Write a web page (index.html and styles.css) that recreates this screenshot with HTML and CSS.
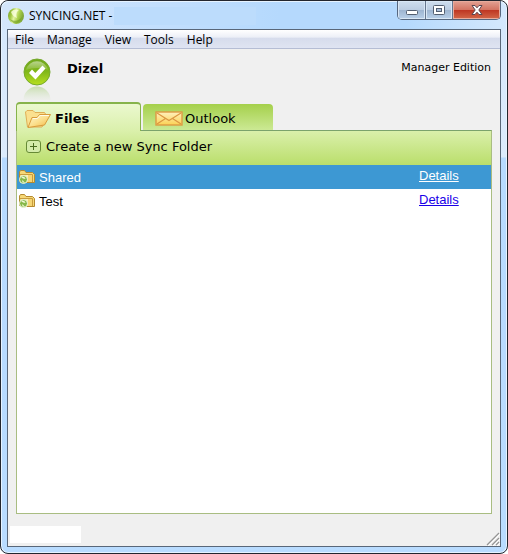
FILE: index.html
```html
<!DOCTYPE html>
<html lang="en">

<head>
  <meta charset="UTF-8">
  <meta name="viewport" content="width=device-width, initial-scale=1.0">
  <title>SYNCING.NET</title>
  <link rel="stylesheet" href="styles.css">
</head>

<body>

  <div class="window">
    <header class="titlebar">
      <svg class="app-icon" width="16" height="16" viewBox="0 0 16 16" aria-hidden="true">
        <defs>
          <linearGradient id="ball" x1="0" y1="0" x2="1" y2="0.3">
            <stop offset="0" stop-color="#6f9a1f" />
            <stop offset="0.3" stop-color="#a3c944" />
            <stop offset="0.5" stop-color="#e4f4a4" />
            <stop offset="0.75" stop-color="#a9cf4a" />
            <stop offset="1" stop-color="#7fa838" />
          </linearGradient>
        </defs>
        <circle cx="8" cy="8" r="8" fill="url(#ball)" />
        <path d="M3 4C5 1 9 1 11 2C8 4 8 7 9 10C6 9 4 7 3 4Z" fill="#fbffe2" opacity="0.8" />
        <path d="M2 11C6 14 11 13 14 9C13 13 10 16 7 15.5C4.500 15 3 13 2 11Z" fill="#6f9c22" opacity="0.6" />
      </svg>
      <span class="title">SYNCING.NET -</span>
      <span class="title-blank"></span>
      <div class="window-buttons">
        <button class="win-btn" aria-label="Minimize">
          <svg width="14" height="12" viewBox="0 0 14 12"><rect x="1.5" y="6.5" width="11" height="4" rx="1" fill="#fff" stroke="#535e70" /></svg>
        </button>
        <button class="win-btn" aria-label="Maximize">
          <svg width="14" height="12" viewBox="0 0 14 12">
            <rect x="1.5" y="1.5" width="11" height="9" rx="1" fill="#fff" stroke="#535e70" />
            <rect x="4.5" y="4.5" width="5" height="3" fill="#a9bdd8" stroke="#535e70" />
          </svg>
        </button>
        <button class="win-btn close" aria-label="Close">
          <svg width="14" height="12" viewBox="0 0 14 12"><path d="M2 1.5H5L7 3.8L9 1.5H12L8.8 6L12 10.5H9L7 8.2L5 10.5H2L5.2 6Z" fill="#fff" stroke="#5a4650" /></svg>
        </button>
      </div>
    </header>

    <div class="client">
      <nav class="menubar">
        <button>File</button>
        <button>Manage</button>
        <button>View</button>
        <button>Tools</button>
        <button>Help</button>
      </nav>

      <div class="account">
        <svg class="status-icon" width="28" height="44" viewBox="0 0 28 44" role="img" aria-label="Connected">
          <defs>
            <linearGradient id="green" x1="0" y1="0" x2="0" y2="1">
              <stop offset="0" stop-color="#6fa61d" />
              <stop offset="0.5" stop-color="#82b81a" />
              <stop offset="1" stop-color="#b8e020" />
            </linearGradient>
            <linearGradient id="shine" x1="0" y1="0" x2="0" y2="1">
              <stop offset="0" stop-color="#fff" stop-opacity="0.5" />
              <stop offset="1" stop-color="#fff" stop-opacity="0.1" />
            </linearGradient>
            <linearGradient id="reflect" gradientUnits="userSpaceOnUse" x1="0" y1="28" x2="0" y2="42">
              <stop offset="0" stop-color="#a9cf7c" stop-opacity="0.6" />
              <stop offset="1" stop-color="#cfe3bb" stop-opacity="0.1" />
            </linearGradient>
          </defs>
          <circle cx="14" cy="14" r="13" fill="url(#green)" stroke="#76aa2c" />
          <path d="M3 12A11.3 11.3 0 0 1 25 12C19 9 9 10 3 12Z" fill="url(#shine)" />
          <path d="M6 15L9 11.5L12.3 15L19.5 7.5L22.5 10.5L12.5 21.5Z" fill="#fff" />
          <path d="M0.5 42A13.5 13.5 0 0 1 27.5 42Z" fill="url(#reflect)" />
        </svg>
        <h1>Dizel</h1>
        <span class="edition">Manager Edition</span>
      </div>

      <div class="tabs" role="tablist">
        <button class="tab active" role="tab" aria-selected="true">
          <svg width="28" height="20" viewBox="0 0 28 20" aria-hidden="true">
            <defs>
              <linearGradient id="folder" x1="0" y1="0" x2="1" y2="1">
                <stop offset="0" stop-color="#fff6cf" />
                <stop offset="0.5" stop-color="#fbe08e" />
                <stop offset="1" stop-color="#f2b540" />
              </linearGradient>
            </defs>
            <path d="M2.5 18L0.5 3L2 1.5H8L10 3.5H19.5L20.5 5V12L17 18Z" fill="#fae08f" stroke="#dfae55" />
            <path d="M3 18.5L7 8.500H12L14.500 5.500H25.500L19.500 16Z" fill="url(#folder)" stroke="#d99c3c" stroke-linejoin="round" />
            <path d="M8 9.5H12.500L15 6.500H24" fill="none" stroke="#fffbe6" />
          </svg>
          Files
        </button>
        <button class="tab" role="tab" aria-selected="false">
          <svg width="28" height="16" viewBox="0 0 28 16" aria-hidden="true">
            <defs>
              <linearGradient id="mail" x1="0" y1="0" x2="0" y2="1">
                <stop offset="0" stop-color="#fff0bd" />
                <stop offset="1" stop-color="#fbd254" />
              </linearGradient>
            </defs>
            <rect x="1" y="2" width="26" height="13" fill="url(#mail)" stroke="#dd9a43" stroke-width="1.4" />
            <path d="M2 3L14 10.5L26 3M2 14L10.5 8.5M26 14L17.5 8.5" fill="none" stroke="#db9641" stroke-width="1.2" />
          </svg>
          Outlook
        </button>
      </div>

      <main class="panel">
        <div class="toolbar">
          <button class="create">
            <svg width="15" height="13" viewBox="0 0 15 13" aria-hidden="true">
              <rect x="0.5" y="0.5" width="14" height="12" rx="2.5" fill="#d4ecaa" stroke="#668a35" />
              <path d="M7.5 3V10M4 6.5H11" stroke="#496b20" />
            </svg>
            Create a new Sync Folder
          </button>
        </div>

        <svg class="symbols" aria-hidden="true">
          <symbol id="sync-folder" viewBox="0 0 16 14">
            <path d="M0.5 11.5V2L1.500 0.500H5.500L7 2.500H13.500L15.500 4.500V12.500H3Z" fill="#f6d877" stroke="#b58a30" />
            <path d="M2 4.500H13V11.500H2Z" fill="#fdf0b4" />
            <path d="M9 5H13V12H9Z" fill="#f5d675" />
            <path d="M1 4.500H13.500V12" fill="none" stroke="#c99c3e" />
            <circle cx="4.5" cy="9.500" r="4" fill="#86b84a" stroke="#f1f6dc" />
            <path d="M2 7C4 5.500 6 7 6.500 9L4 8.500ZM3.500 10L6 13C4 13 2.500 12 3.500 10Z" fill="#f0f8d5" />
          </symbol>
        </svg>

        <table class="folders">
          <tbody>
            <tr class="selected">
              <td><div class="folder-name"><svg width="16" height="14" aria-hidden="true"><use href="#sync-folder" /></svg>Shared</div></td>
              <td class="actions"><a href="#shared">Details</a></td>
            </tr>
            <tr>
              <td><div class="folder-name"><svg width="16" height="14" aria-hidden="true"><use href="#sync-folder" /></svg>Test</div></td>
              <td class="actions"><a href="#test">Details</a></td>
            </tr>
          </tbody>
        </table>
      </main>

      <footer class="statusbar">
        <span class="status-text"></span>
        <svg class="grip" width="14" height="14" viewBox="0 0 14 14" aria-hidden="true">
          <path d="M2 14L14 2M7 14L14 7M11 14L14 11" stroke="#fff" />
          <path d="M1 13L13 1M6 13L13 6M10 13L13 10" stroke="#949494" stroke-width="1.2" />
        </svg>
      </footer>
    </div>
  </div>

</body>

</html>
```
FILE: styles.css
```css
* {
  box-sizing: border-box;
}

body {
  margin: 0;
  background: #fff;
  color: #000;
  font-family: Verdana, "DejaVu Sans", sans-serif;
  font-size: 13px;
}

button {
  margin: 0;
  padding: 0;
  border: none;
  background: none;
  color: inherit;
  font: inherit;
}

svg {
  flex: none;
}

/* window frame */
.window {
  display: flex;
  flex-direction: column;
  min-height: 100vh;
  padding: 0 6px 6px;
  border: 1px solid #23262e;
  border-radius: 8px;
  background: linear-gradient(#d4e7fc, #dcebfc 156px, #b7daff 157px, #b9dcff);
  box-shadow: inset 0 0 0 1px #e6f3ff;
}

.titlebar {
  display: flex;
  align-items: center;
  height: 28px;
  margin: 0 -5px;
  padding-left: 6px;
  border-top: 1px solid #e6f3ff;
  border-radius: 7px 7px 0 0;
  background: linear-gradient(90deg, #d4e6fb, #c3dffd 30%, #b5d9fd 55%, #b5d9fd 80%, #d4e8fd);
}

.title {
  margin-left: 5px;
  font-family: "Segoe UI", "Open Sans", sans-serif;
  font-size: 12px;
}

.title-blank {
  width: 142px;
  height: 18px;
  margin-left: 2px;
  background: #bcdcfc;
}

.window-buttons {
  display: flex;
  align-self: flex-start;
  margin-top: -1px;
  margin-left: auto;
  margin-right: 5px;
  border: 1px solid #56677f;
  border-top: none;
  border-radius: 0 0 5px 5px;
  overflow: hidden;
}

.win-btn {
  display: flex;
  align-items: center;
  justify-content: center;
  width: 27px;
  height: 18px;
  background: linear-gradient(#cfdeee, #bccde2 48%, #9db4d0 50%, #b9d0e9);
  box-shadow: inset 0 0 0 1px #d9e7f5;
}

.win-btn + .win-btn {
  border-left: 1px solid #66768e;
}

.win-btn.close {
  width: 48px;
  background: linear-gradient(#e3a294, #d47563 48%, #bd3521 50%, #d36849);
  box-shadow: inset 0 0 0 1px #e8ab9c;
}

.client {
  display: flex;
  flex: 1;
  flex-direction: column;
  border: 1px solid #596779;
  background: #f0f0f0;
}

.menubar {
  display: flex;
  gap: 13px;
  height: 19px;
  padding: 0 7px;
  border-bottom: 1px solid #b5bdd4;
  background: linear-gradient(#fff, #eceff7 40%, #d6dcec 45%, #dfe4f2);
  font-family: "Segoe UI", "Open Sans", sans-serif;
  font-size: 12px;
}

/* account header */
.account {
  display: flex;
  align-items: flex-start;
  height: 53px;
  padding: 9px 9px 0 15px;
}

.account h1 {
  flex: 1;
  margin: 3px 0 0 16px;
  font-size: 13px;
  line-height: 16px;
}

.edition {
  margin-top: 3px;
  font-size: 11px;
  line-height: 14px;
}

/* tabs */
.tabs {
  display: flex;
  align-items: flex-end;
  gap: 2px;
  height: 28px;
  margin: 0 8px;
}

.tab {
  display: flex;
  align-items: center;
  gap: 2px;
  width: 130px;
  height: 26px;
  padding: 2px 0 0 12px;
  border-radius: 4px 4px 0 0;
  background: linear-gradient(#a5d04b, #cce994);
}

.tab.active {
  z-index: 1;
  width: 125px;
  height: 29px;
  margin-bottom: -1px;
  padding: 2px 0 0 8px;
  border: 1px solid #86b34b;
  border-top-width: 2px;
  border-bottom: none;
  background: linear-gradient(#ebf8cf, #daf0ab);
  font-weight: bold;
}

.panel {
  flex: 1;
  margin: 0 8px;
  border: 1px solid #a9bd82;
  border-top-color: #7ba36c;
  background: #fff;
}

.toolbar {
  display: flex;
  align-items: center;
  height: 34px;
  padding: 0 9px 3px;
  background: linear-gradient(#daf0ab, #bade6b);
}

.create {
  display: flex;
  align-items: center;
  gap: 5px;
}

.symbols {
  display: none;
}

/* folder list */
.folders {
  width: 100%;
  border-collapse: collapse;
  font-family: Arial, "Liberation Sans", sans-serif;
}

.folders td {
  height: 24px;
  padding: 0 0 0 2px;
}

.folder-name {
  display: flex;
  align-items: center;
  gap: 4px;
}

.folders .actions {
  width: 72px;
  padding: 0 0 4px;
}

.folders a {
  color: #1a00e8;
}

.folders .selected {
  background: #3d98d3;
  color: #fff;
}

.folders .selected a {
  color: #fff;
}

/* status bar */
.statusbar {
  display: flex;
  align-items: flex-end;
  justify-content: space-between;
  height: 32px;
  padding-left: 2px;
}

.status-text {
  width: 71px;
  height: 17px;
  margin-bottom: 3px;
  background: #fff;
}
```
